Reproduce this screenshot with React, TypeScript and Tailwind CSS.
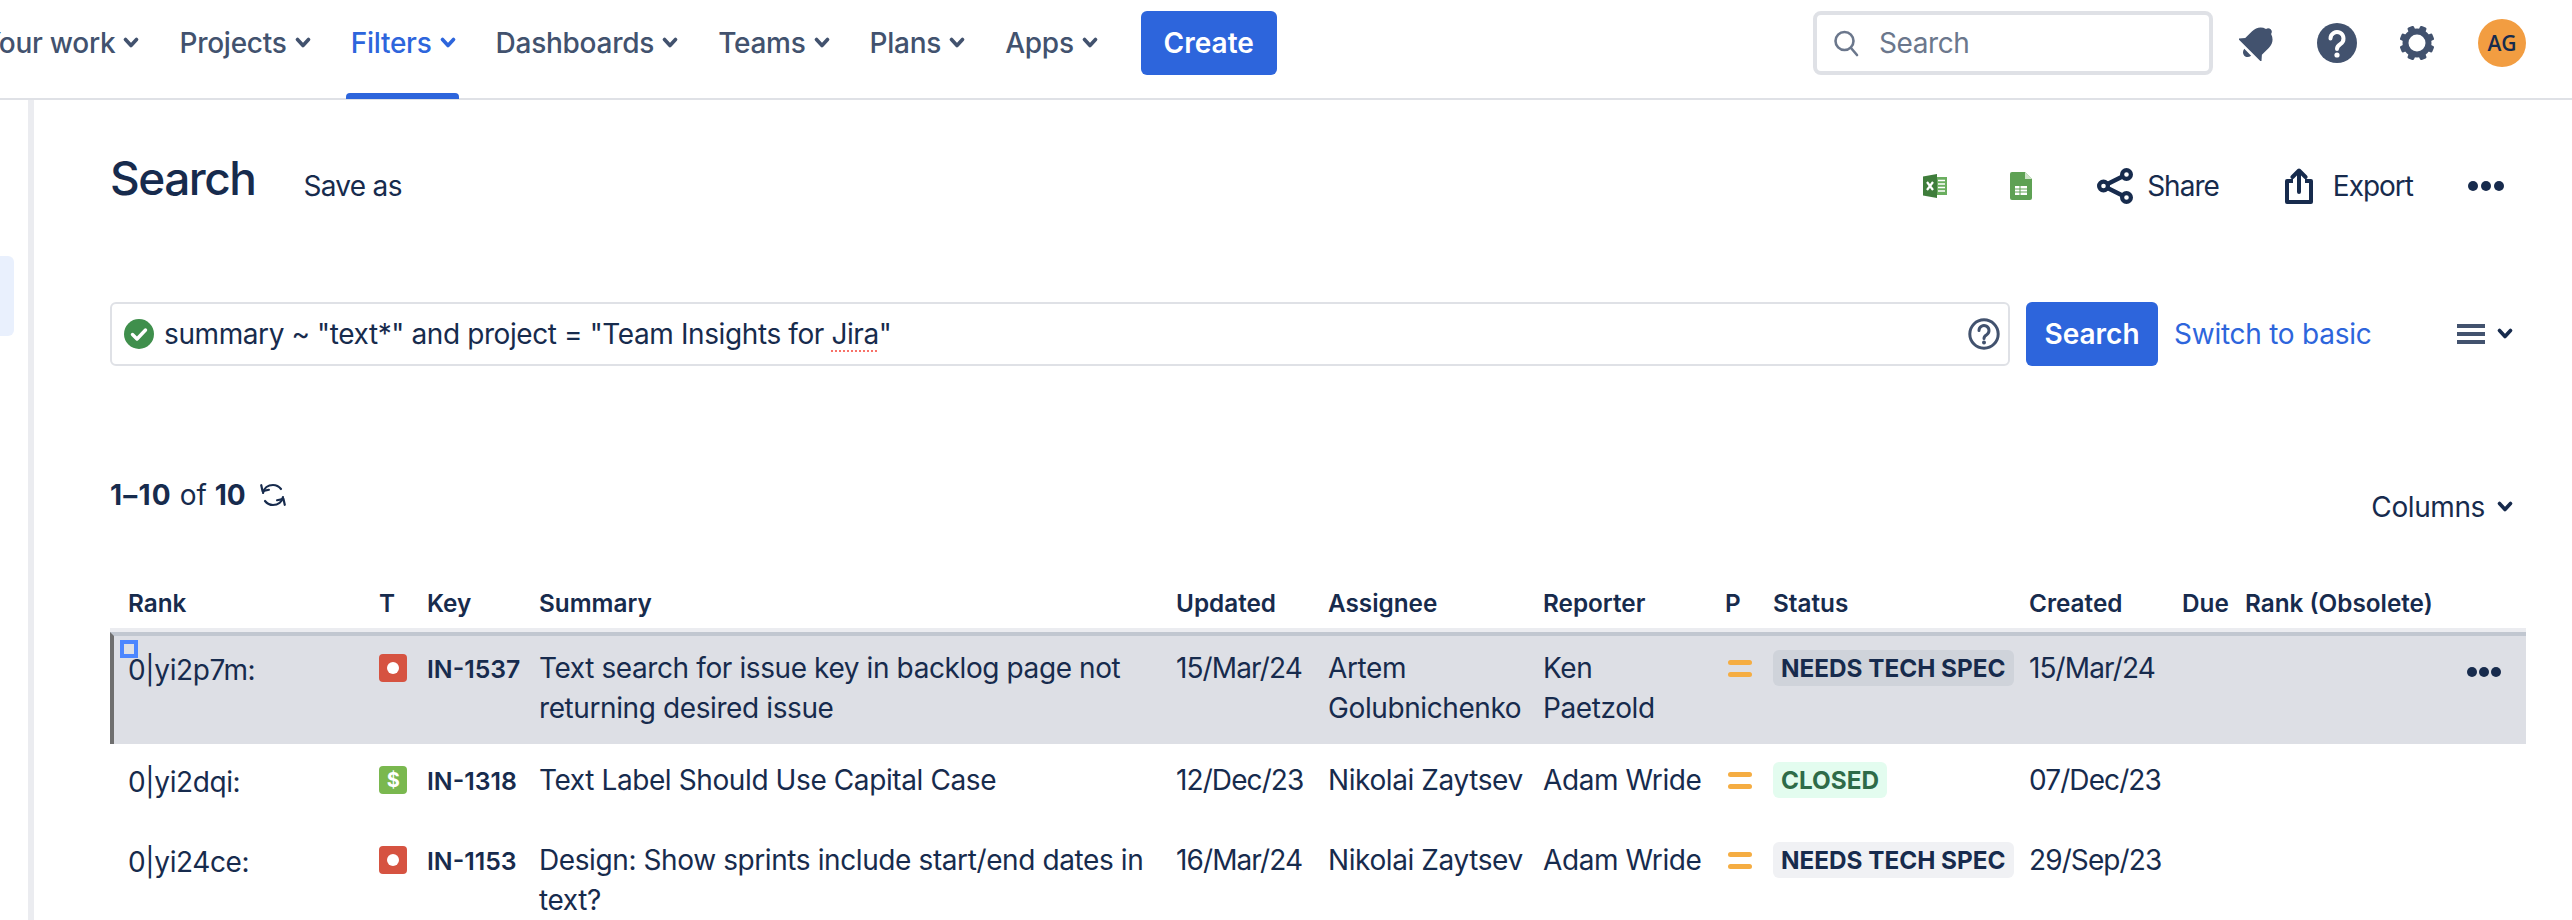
import type { ReactNode } from 'react';

const navItems = ['Your work', 'Projects', 'Filters', 'Dashboards', 'Teams', 'Plans', 'Apps'];

function Chevron({ className = 'text-[#42526e]' }: { className?: string }) {
  return (
    <svg width="16" height="12" viewBox="0 0 16 12" fill="none" className={className}>
      <path d="M2.5 2.5 8 8.5l5.5-6" stroke="currentColor" strokeWidth="3.6" strokeLinecap="round" strokeLinejoin="round" />
    </svg>
  );
}

function Dots({ width = 36, r = 5 }: { width?: number; r?: number }) {
  return (
    <svg width={width} height={r * 2} viewBox={`0 0 ${width} ${r * 2}`} className="text-[#172b4d]">
      <circle cx={r} cy={r} r={r} fill="currentColor" />
      <circle cx={width / 2} cy={r} r={r} fill="currentColor" />
      <circle cx={width - r} cy={r} r={r} fill="currentColor" />
    </svg>
  );
}

function BellIcon() {
  return (
    <svg width="36" height="36" viewBox="3 3 26 26" className="text-[#42526e]">
      <g transform="rotate(45 16 16)" fill="currentColor">
        <path d="M16 2c-1.400 0-2.400.9-2.600 2.200C9.600 5.300 7.500 8.500 7.500 12.500v7L4 23.500h24l-3.500-4v-7c0-4-2.100-7.200-5.900-8.300C18.400 2.900 17.400 2 16 2z" />
        <path d="M12.500 25.500h7c-.3 2-1.700 3.500-3.500 3.500s-3.200-1.500-3.500-3.500z" />
      </g>
    </svg>
  );
}

function HelpIcon() {
  return (
    <svg width="40" height="40" viewBox="0 0 40 40">
      <circle cx="20" cy="20" r="20" fill="#42526e" />
      <path d="M13.500 15.500a6.500 6.500 0 1 1 10 5.500c-2.300 1.500-3.500 2.400-3.500 5" fill="none" stroke="#fff" strokeWidth="4" strokeLinecap="round" />
      <circle cx="20" cy="32" r="2.600" fill="#fff" />
    </svg>
  );
}

function GearIcon() {
  return (
    <svg width="36" height="36" viewBox="0 0 36 36" className="text-[#42526e]">
      <circle cx="18" cy="18" r="11.500" fill="none" stroke="currentColor" strokeWidth="6" />
      {[0, 45, 90, 135, 180, 225, 270, 315].map((a) => (
        <rect key={a} x="14.500" y="0.500" width="7" height="7" rx="1.500" fill="currentColor" transform={`rotate(${a + 22.5} 18 18)`} />
      ))}
    </svg>
  );
}

function ExcelIcon() {
  return (
    <svg width="24" height="24" viewBox="0 0 24 24">
      <rect x="12" y="3" width="12" height="18" fill="#6aae5f" />
      <path d="M15 6.500h7M15 10h7M15 13.500h7M15 17h7" stroke="#fff" strokeWidth="1.600" />
      <path d="M0 2.500 14 0v24L0 21.500z" fill="#3f7d3b" />
      <path d="M4 8l6 8M10 8l-6 8" stroke="#fff" strokeWidth="2.200" />
    </svg>
  );
}

function SheetsIcon() {
  return (
    <svg width="22" height="28" viewBox="0 0 22 28">
      <path d="M2 0h13l7 7v19a2 2 0 0 1-2 2H2a2 2 0 0 1-2-2V2a2 2 0 0 1 2-2z" fill="#5ea154" />
      <path d="M15 0l7 7h-7z" fill="#cfe3c9" />
      <rect x="5" y="14" width="12" height="9" fill="#fff" />
      <path d="M5 17h12M5 20h12M10 14v9" stroke="#5ea154" strokeWidth="1" />
    </svg>
  );
}

function ShareIcon() {
  return (
    <svg width="36" height="36" viewBox="0 0 36 36" fill="none" stroke="#172b4d" strokeWidth="4.200">
      <circle cx="29.500" cy="6.500" r="4.400" />
      <circle cx="6.500" cy="18" r="4.400" />
      <circle cx="29.500" cy="29.500" r="4.400" />
      <path d="M10.500 16 25.500 8.500M10.500 20l15 7.500" />
    </svg>
  );
}

function ExportIcon() {
  return (
    <svg width="28" height="36" viewBox="0 0 28 36" fill="none" stroke="#172b4d" strokeWidth="4" strokeLinejoin="round">
      <path d="M8 13H2v21h24V13h-6" />
      <path d="M14 24V3M7.500 9 14 2.500 20.500 9" strokeLinecap="round" />
    </svg>
  );
}

function QueryHelpIcon() {
  return (
    <svg width="32" height="32" viewBox="0 0 32 32" fill="none" stroke="#42526e">
      <circle cx="16" cy="16" r="14.200" strokeWidth="3" />
      <path d="M11 12.500a5 5 0 1 1 7.700 4.200c-1.800 1.100-2.700 1.700-2.700 3.800" strokeWidth="3" strokeLinecap="round" />
      <circle cx="16" cy="24.500" r="2" fill="#42526e" stroke="none" />
    </svg>
  );
}

function RefreshIcon() {
  return (
    <svg width="26" height="26" viewBox="0 0 26 26" fill="none" stroke="#172b4d" strokeWidth="2.200" strokeLinecap="round" strokeLinejoin="round">
      <path d="M3 11C4 6 8 3 13 3c3.500 0 6 1.500 8 4" />
      <path d="M9 9H2.500V3" transform="rotate(-12 3 9)" />
      <path d="M23 15c-1 5-5 8-10 8-3.500 0-6-1.500-8-4" />
      <path d="M17 17h6.500v6" transform="rotate(-12 23 17)" />
    </svg>
  );
}

function Lozenge({ label, tone }: { label: string; tone: 'selected' | 'gray' | 'green' }) {
  const colors = {
    selected: 'bg-[#cfd3da] text-[#172b4d]',
    gray: 'bg-[#f0f1f4] text-[#172b4d]',
    green: 'bg-[#e3fcef] text-[#2e6b48]',
  }[tone];
  return (
    <span className={`flex h-9 items-center rounded-md px-2 text-[24.300px] font-bold tracking-normal whitespace-nowrap ${colors}`}>
      {label}
    </span>
  );
}

function TypeIcon({ kind }: { kind: 'bug' | 'money' }) {
  if (kind === 'money') {
    return (
      <div className="flex h-7 w-7 items-center justify-center rounded-[4px] bg-[#7ab84f] text-[20px] leading-none font-bold text-white">
        $
      </div>
    );
  }
  return (
    <div className="flex h-7 w-7 items-center justify-center rounded-[4px] bg-[#d65341]">
      <div className="h-3 w-3 rounded-full bg-white" />
    </div>
  );
}

function Priority() {
  return (
    <div className="box-content flex w-6 flex-col gap-[7px] pt-[12px] pl-[3px]">
      <div className="h-[5px] w-6 rounded-sm bg-[#f5ad42]" />
      <div className="h-[5px] w-6 rounded-sm bg-[#f5ad42]" />
    </div>
  );
}

type Row = {
  rank: string;
  type: 'bug' | 'money';
  key: string;
  summary: string;
  updated: string;
  assignee: string;
  reporter: string;
  status: string;
  created: string;
};

const rows: Row[] = [
  {
    rank: '0|yi2p7m:',
    type: 'bug',
    key: 'IN-1537',
    summary: 'Text search for issue key in backlog page not returning desired issue',
    updated: '15/Mar/24',
    assignee: 'Artem Golubnichenko',
    reporter: 'Ken Paetzold',
    status: 'NEEDS TECH SPEC',
    created: '15/Mar/24',
  },
  {
    rank: '0|yi2dqi:',
    type: 'money',
    key: 'IN-1318',
    summary: 'Text Label Should Use Capital Case',
    updated: '12/Dec/23',
    assignee: 'Nikolai Zaytsev',
    reporter: 'Adam Wride',
    status: 'CLOSED',
    created: '07/Dec/23',
  },
  {
    rank: '0|yi24ce:',
    type: 'bug',
    key: 'IN-1153',
    summary: 'Design: Show sprints include start/end dates in text?',
    updated: '16/Mar/24',
    assignee: 'Nikolai Zaytsev',
    reporter: 'Adam Wride',
    status: 'NEEDS TECH SPEC',
    created: '29/Sep/23',
  },
];

const columns: { label: string; width: string }[] = [
  { label: 'Rank', width: 'w-[269px] pl-[18px]' },
  { label: 'T', width: 'w-[48px]' },
  { label: 'Key', width: 'w-[112px]' },
  { label: 'Summary', width: 'w-[637px]' },
  { label: 'Updated', width: 'w-[152px]' },
  { label: 'Assignee', width: 'w-[215px]' },
  { label: 'Reporter', width: 'w-[182px]' },
  { label: 'P', width: 'w-[48px]' },
  { label: 'Status', width: 'w-[256px]' },
  { label: 'Created', width: 'w-[153px]' },
  { label: 'Due', width: 'w-[63px]' },
  { label: 'Rank (Obsolete)', width: 'w-[281px]' },
];

function Cell({ selected, children, className = '' }: { selected: boolean; children?: ReactNode; className?: string }) {
  return (
    <td className={`p-0 align-top ${selected ? 'border-t-4 border-[#c1c7d0] bg-[#dddfe5] pt-3' : 'pt-4'} ${className}`}>
      {children}
    </td>
  );
}

function IssueRow({ row, index }: { row: Row; index: number }) {
  const selected = index === 0;
  const height = index === 1 ? 'h-[80px]' : 'h-[112px]';
  return (
    <tr className={height}>
      <td className={`relative p-0 align-top ${selected ? 'border-t-4 border-l-4 border-t-[#c1c7d0] border-l-[#6f6f6f] bg-[#dddfe5] pt-[14px] pl-[14px]' : 'pt-[18px] pl-[18px]'}`}>
        {selected && <div className="absolute top-[4px] left-[6px] h-[18px] w-[18px] border-4 border-[#4c86ff]" />}
        {row.rank}
      </td>
      <Cell selected={selected}>
        <div className="pt-[6px]">
          <TypeIcon kind={row.type} />
        </div>
      </Cell>
      <Cell selected={selected} className="text-[24.800px] font-semibold tracking-normal">
        <div className="leading-[42px]">{row.key}</div>
      </Cell>
      <Cell selected={selected} className="pr-4">{row.summary}</Cell>
      <Cell selected={selected} className="tracking-[-0.9px]">{row.updated}</Cell>
      <Cell selected={selected} className="pr-3">{row.assignee}</Cell>
      <Cell selected={selected} className="pr-4">{row.reporter}</Cell>
      <Cell selected={selected}>
        <Priority />
      </Cell>
      <Cell selected={selected}>
        <div className="flex pt-[2px]">
          <Lozenge label={row.status} tone={!selected && row.status === 'CLOSED' ? 'green' : selected ? 'selected' : 'gray'} />
        </div>
      </Cell>
      <Cell selected={selected} className="tracking-[-0.9px]">{row.created}</Cell>
      <Cell selected={selected} />
      <Cell selected={selected}>
        {selected && (
          <div className="flex justify-end pt-[19px] pr-[25px]">
            <Dots width={34} />
          </div>
        )}
      </Cell>
    </tr>
  );
}

export default function App() {
  return (
    <div className="h-[920px] w-[2572px] overflow-hidden bg-white font-['Inter',sans-serif] text-[28px] leading-[40px] tracking-[-0.4px] text-[#172b4d]">
      {/* Top nav */}
      <header className="flex h-[100px] items-start border-b-2 border-[#dfe1e6] pt-[11px] pr-[46px]">
        <nav className="-ml-[18px] flex items-center gap-10 tracking-[-0.25px]">
          {navItems.map((item) => {
            const active = item === 'Filters';
            return (
              <div key={item} className={`relative flex h-16 items-center gap-2 font-medium ${active ? 'text-[#2d65dc]' : 'text-[#42526e]'}`}>
                <span>{item}</span>
                <Chevron className={active ? 'text-[#2d65dc]' : 'text-[#42526e]'} />
                {active && <div className="absolute top-[82px] -right-[3px] -left-[5px] h-[6px] rounded-t-sm bg-[#2d65dc]" />}
              </div>
            );
          })}
        </nav>
        <button className="ml-[43px] flex h-16 w-[136px] items-center justify-center rounded-md bg-[#2d65dc] font-semibold tracking-normal text-white">
          Create
        </button>
        <div className="ml-auto flex h-16 items-center">
          <div className="flex h-16 w-[400px] items-center rounded-lg border-4 border-[#dfe1e6] pl-4 text-[#6b778c]">
            <svg width="26" height="28" viewBox="0 0 26 28" fill="none" stroke="#6b778c" strokeWidth="2.600" strokeLinecap="round">
              <circle cx="11.500" cy="12" r="9" />
              <path d="M18 19l6 7" />
            </svg>
            <span className="ml-[20px]">Search</span>
          </div>
          <div className="ml-[26px]">
            <BellIcon />
          </div>
          <div className="ml-[42px]">
            <HelpIcon />
          </div>
          <div className="ml-[42px]">
            <GearIcon />
          </div>
          <div className="ml-[43px] flex h-12 w-12 items-center justify-center rounded-full bg-[#f29d41] font-['Open_Sans',sans-serif] text-[21px] font-semibold tracking-normal">
            AG
          </div>
        </div>
      </header>

      <div className="flex h-[820px]">
        {/* Collapsed sidebar */}
        <aside className="flex w-[110px] shrink-0">
          <div className="w-7 pt-[156px]">
            <div className="h-20 w-[14px] rounded-r-md bg-[#e9f0fd]" />
          </div>
          <div className="w-[6px] bg-[#ebecf0]" />
        </aside>

        <main className="min-w-0 flex-1 pt-[50px] pr-[46px]">
          {/* Title row */}
          <div className="flex items-start">
            <h1 className="text-[46px] leading-[56px] font-medium tracking-[-1.5px]">Search</h1>
            <span className="mt-4 ml-[48px] tracking-[-0.7px]">Save as</span>
            <div className="mt-3 ml-auto flex h-12 items-center pr-[22px]">
              <ExcelIcon />
              <div className="ml-[63px]">
                <SheetsIcon />
              </div>
              <div className="ml-[65px]">
                <ShareIcon />
              </div>
              <span className="ml-[14px] tracking-[-1px]">Share</span>
              <div className="ml-[66px]">
                <ExportIcon />
              </div>
              <span className="ml-[20px] tracking-[-1px]">Export</span>
              <div className="ml-[55px]">
                <Dots />
              </div>
            </div>
          </div>

          {/* JQL query */}
          <div className="mt-[92px] flex h-16 items-center pr-[13px]">
            <div className="flex h-16 w-[1900px] items-center rounded-md border-2 border-[#dfe1e6] pr-[8px] pl-3">
              <svg width="30" height="30" viewBox="0 0 30 30">
                <circle cx="15" cy="15" r="15" fill="#3f8f4c" />
                <path d="M8.500 15.500l4.500 4.500 8.500-9" fill="none" stroke="#fff" strokeWidth="3.400" strokeLinecap="round" strokeLinejoin="round" />
              </svg>
              <span className="ml-[10px]">
                summary ~ "text*" and project = "Team Insights for{' '}
                <span className="underline decoration-[#f87168] decoration-dotted decoration-2 underline-offset-[6px]">Jira</span>"
              </span>
              <div className="ml-auto">
                <QueryHelpIcon />
              </div>
            </div>
            <button className="ml-4 flex h-16 w-[132px] items-center justify-center rounded-md bg-[#2d65dc] font-semibold tracking-normal text-white">
              Search
            </button>
            <a className="ml-4 tracking-[-0.25px] text-[#2d65dc]">Switch to basic</a>
            <div className="ml-auto flex items-center gap-3">
              <div className="flex w-7 flex-col gap-[4px]">
                <div className="h-1 bg-[#42526e]" />
                <div className="h-1 bg-[#42526e]" />
                <div className="h-1 bg-[#42526e]" />
              </div>
              <Chevron className="text-[#172b4d]" />
            </div>
          </div>

          {/* Results header */}
          <div className="mt-[109px] flex items-start pr-[13px]">
            <div className="flex items-center">
              <span className="tracking-normal">
                <b className="font-bold tracking-[1.2px]">1–10</b> of <b className="font-bold">10</b>
              </span>
              <div className="ml-[14px]">
                <RefreshIcon />
              </div>
            </div>
            <div className="mt-3 ml-auto flex items-center gap-3">
              <span>Columns</span>
              <Chevron className="text-[#172b4d]" />
            </div>
          </div>

          {/* Issue table */}
          <table className="mt-[43px] w-[2416px] table-fixed border-separate border-spacing-0">
            <thead>
              <tr>
                {columns.map((c) => (
                  <th key={c.label} className={`h-[62px] border-b-4 border-[#ebecf0] pb-[9px] text-left align-bottom text-[24.300px] leading-8 font-semibold tracking-normal whitespace-nowrap ${c.width}`}>
                    {c.label}
                  </th>
                ))}
              </tr>
            </thead>
            <tbody>
              {rows.map((row, i) => (
                <IssueRow key={row.key} row={row} index={i} />
              ))}
            </tbody>
          </table>
        </main>
      </div>
    </div>
  );
}
